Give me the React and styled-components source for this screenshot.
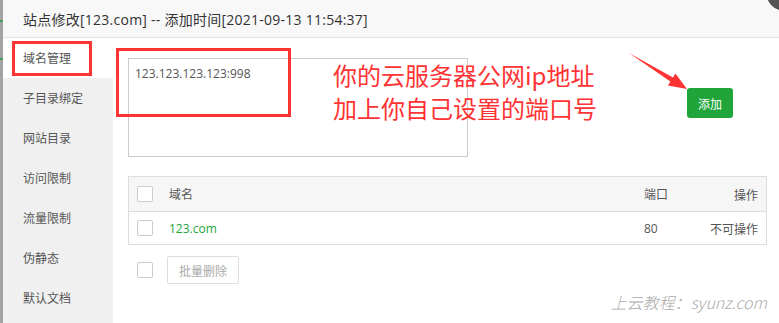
import React from 'react';
import styled, { createGlobalStyle } from 'styled-components';

const Global = createGlobalStyle`
  html, body { margin: 0; padding: 0; }
  body {
    width: 779px;
    height: 323px;
    overflow: hidden;
    background: #fff;
    font-family: "Open Sans", "Noto Sans CJK SC", sans-serif;
    font-size: 12px;
    color: #555;
  }
`;

const Page = styled.div`
  display: flex;
  width: 779px;
  height: 323px;
  position: relative;
  overflow: hidden;
`;

const Backdrop = styled.div`
  width: 3px;
  background: #a3a3a3;
  position: relative;
`;

const Tick = styled.span`
  position: absolute;
  left: 0;
  top: ${p => p.top}px;
  width: 3px;
  height: 2px;
  background: #4a9a5a;
`;

const Dialog = styled.div`
  flex: 1;
  display: flex;
  flex-direction: column;
`;

const Header = styled.div`
  height: 37px;
  background: #f8f8f8;
  border-bottom: 1px solid #e5e5e5;
  display: flex;
  align-items: center;
  padding-left: 20px;
  font-size: 14px;
  letter-spacing: 0.25px;
  color: #333;
`;

const Body = styled.div`
  flex: 1;
  display: flex;
`;

const Sidebar = styled.ul`
  list-style: none;
  margin: 0;
  padding: 0;
  width: 110px;
  background: #f0f0f0;
`;

const NavItem = styled.li`
  height: 40px;
  display: flex;
  align-items: center;
  padding-left: 20px;
  color: #555;
  background: ${p => (p.active ? '#fff' : 'transparent')};
  position: relative;
`;

const Content = styled.div`
  flex: 1;
  padding: 20px 12px 0 15px;
  position: relative;
`;

const TopRow = styled.div`
  display: flex;
  align-items: flex-start;
`;

const TextArea = styled.div`
  width: 340px;
  height: 99px;
  border: 1px solid #ccc;
  padding: 7px 6px;
  box-sizing: border-box;
  color: #555;
  font-size: 12px;
  line-height: 16px;
`;

const AddButton = styled.button`
  margin-left: 219px;
  margin-top: 30px;
  width: 46px;
  height: 30px;
  border: none;
  border-radius: 3px;
  background: #20a53a;
  color: #fff;
  font-family: "Noto Sans CJK SC", sans-serif;
  font-size: 12px;
  padding: 0;
`;

const Table = styled.div`
  margin-top: 19px;
  border: 1px solid #ddd;
  width: 639px;
  box-sizing: border-box;
`;

const Row = styled.div`
  display: flex;
  align-items: center;
  height: ${p => (p.head ? 34 : 32)}px;
  padding: 0 8px;
  background: ${p => (p.head ? '#f6f6f6' : '#fff')};
  border-top: ${p => (p.head ? 'none' : '1px solid #ddd')};
  font-family: "Noto Sans CJK SC", sans-serif;
`;

const Check = styled.span`
  width: 16px;
  height: 16px;
  box-sizing: border-box;
  border: 1px solid #ccc;
  border-radius: 2px;
  background: #fff;
  flex-shrink: 0;
`;

const NameCell = styled.span`
  flex: 1;
  margin-left: 16px;
  color: ${p => (p.link ? '#20a53a' : '#555')};
  font-family: "Open Sans", "Noto Sans CJK SC", sans-serif;
`;

const PortCell = styled.span`
  width: 66px;
  font-family: "Open Sans", "Noto Sans CJK SC", sans-serif;
`;

const OpCell = styled.span`
  width: 48px;
  text-align: right;
`;

const Footer = styled.div`
  display: flex;
  align-items: center;
  margin-top: 11px;
  padding-left: 9px;
`;

const GhostButton = styled.button`
  margin-left: 14px;
  height: 28px;
  padding: 0 11px;
  border: 1px solid #ddd;
  border-radius: 2px;
  background: #fff;
  color: #aaa;
  font-family: "Noto Sans CJK SC", sans-serif;
  font-size: 12px;
`;

const RedBox = styled.div`
  position: absolute;
  left: ${p => p.x}px;
  top: ${p => p.y}px;
  width: ${p => p.w}px;
  height: ${p => p.h}px;
  border: 3px solid #f33;
  box-sizing: border-box;
  pointer-events: none;
`;

const Note = styled.div`
  position: absolute;
  left: 220px;
  top: 20px;
  color: #f33;
  font-family: "Noto Sans CJK SC", sans-serif;
  font-size: 24px;
  line-height: 33px;
  white-space: nowrap;
`;

const Arrow = styled.svg`
  position: absolute;
  left: 512px;
  top: 10px;
`;

const Watermark = styled.div`
  position: absolute;
  right: 12px;
  bottom: 9px;
  color: #aaa;
  font-style: italic;
  font-size: 16px;
  font-family: "Noto Sans CJK SC", sans-serif;
  font-weight: 300;
`;

const Close = styled.div`
  position: absolute;
  left: 766px;
  top: -27px;
  width: 38px;
  height: 38px;
  border-radius: 50%;
  background: #555;
  box-shadow: 0 0 0 1px #fff;
`;

const navs = ['域名管理', '子目录绑定', '网站目录', '访问限制', '流量限制', '伪静态', '默认文档'];

export default function App() {
  return (
    <Page>
      <Global />
      <Backdrop>
        <Tick top={20} />
        <Tick top={58} />
      </Backdrop>
      <Dialog>
        <Header>站点修改[123.com] -- 添加时间[2021-09-13 11:54:37]</Header>
        <Body>
          <Sidebar>
            {navs.map((n, i) => (
              <NavItem key={n} active={i === 0}>
                {n}
                {i === 0 && <RedBox x={9} y={3} w={80} h={35} />}
              </NavItem>
            ))}
          </Sidebar>
          <Content>
            <TopRow>
              <TextArea>123.123.123.123:998</TextArea>
              <AddButton>添加</AddButton>
            </TopRow>
            <Table>
              <Row head>
                <Check />
                <NameCell>域名</NameCell>
                <PortCell>端口</PortCell>
                <OpCell>操作</OpCell>
              </Row>
              <Row>
                <Check />
                <NameCell link>123.com</NameCell>
                <PortCell>80</PortCell>
                <OpCell>不可操作</OpCell>
              </Row>
            </Table>
            <Footer>
              <Check />
              <GhostButton>批量删除</GhostButton>
            </Footer>
            <RedBox x={3} y={10} w={175} h={69} />
            <Note>
              你的云服务器公网ip地址
              <br />
              加上你自己设置的端口号
            </Note>
            <Arrow width="66" height="46" viewBox="0 0 66 46">
              <polygon points="4,5 48,29.4 50.4,25.6 62,41 43,37.4 45.4,33.6" fill="#f33" />
            </Arrow>
            <Watermark>上云教程：syunz.com</Watermark>
          </Content>
        </Body>
      </Dialog>
      <Close />
    </Page>
  );
}
